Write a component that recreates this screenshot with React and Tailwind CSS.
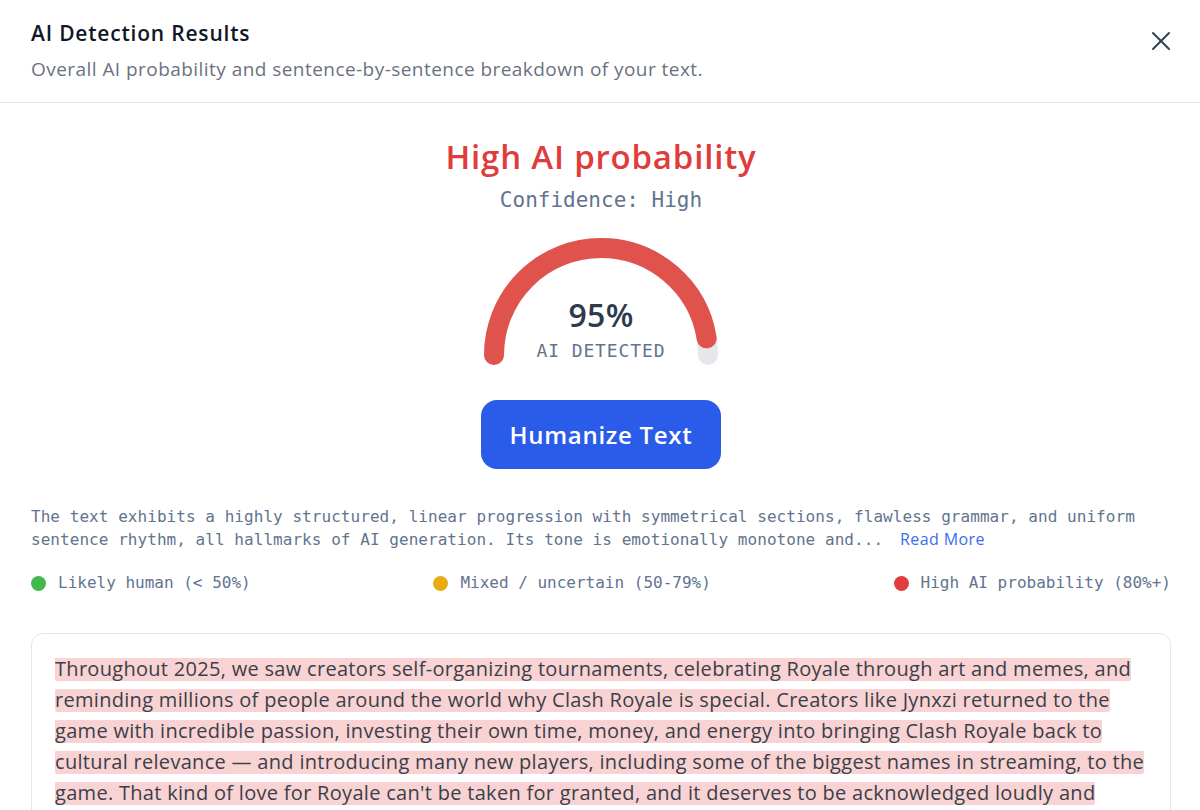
import React from 'react';
import { X } from 'lucide-react';

const sans = { fontFamily: '"Open Sans", "Noto Sans", sans-serif' };
const mono = { fontFamily: '"DejaVu Sans Mono", "Liberation Mono", monospace' };

const Gauge = ({ value }) => (
    <div className="relative w-[240px] h-[130px]">
        <svg width="240" height="130" viewBox="0 0 240 130">
            {/* background track */}
            <path d="M 13 118 A 107 107 0 0 1 227 118" fill="none" stroke="#e5e7eb" strokeWidth="20" strokeLinecap="round" />
            <path
                d="M 13 118 A 107 107 0 0 1 227 118"
                fill="none"
                stroke="#e0524c"
                strokeWidth="20"
                strokeLinecap="round"
                pathLength="100"
                strokeDasharray={`${value} 100`}
            />
        </svg>
        <div className="absolute inset-0 flex flex-col items-center justify-end pb-[4px]">
            <div className="text-[32px] font-semibold text-[#2f3a4d] leading-[36px] tracking-[0.3px]" style={sans}>{value}%</div>
            <div className="text-[18px] tracking-[0.05em] text-slate-500 leading-[24px] mt-[6px]" style={mono}>AI DETECTED</div>
        </div>
    </div>
);

const legend = [
    { label: 'Likely human (< 50%)', dot: 'bg-[#40b94f]' },
    { label: 'Mixed / uncertain (50-79%)', dot: 'bg-[#e6ae12]' },
    { label: 'High AI probability (80%+)', dot: 'bg-[#e23d3d]' },
];

const body =
    "Throughout 2025, we saw creators self-organizing tournaments, celebrating Royale through art and memes, and reminding millions of people around the world why Clash Royale is special. Creators like Jynxzi returned to the game with incredible passion, investing their own time, money, and energy into bringing Clash Royale back to cultural relevance — and introducing many new players, including some of the biggest names in streaming, to the game. That kind of love for Royale can't be taken for granted, and it deserves to be acknowledged loudly and publicly.";

export default function App() {
    return (
        <div className="w-[1200px] h-[810px] overflow-hidden bg-white" style={sans}>
            {/* header */}
            <div className="flex items-start justify-between pl-[31px] pr-[23px] pt-[19px] pb-[19px] border-b border-gray-200">
                <div>
                    <h2 className="text-[21px] leading-[28px] font-semibold text-gray-900 tracking-[0.8px]">AI Detection Results</h2>
                    <p className="text-[19px] leading-[28px] text-gray-500 mt-[8px] tracking-[0.45px]">Overall AI probability and sentence-by-sentence breakdown of your text.</p>
                </div>
                <button className="mt-[6px] text-slate-700">
                    <X size={32} strokeWidth={1.5} />
                </button>
            </div>

            <div className="pl-[31px] pr-[29px]">
                <div className="flex flex-col items-center pt-[34px]">
                    <h1 className="text-[33px] leading-[40px] font-semibold text-[#e03c3c] tracking-[0.8px]">High AI probability</h1>
                    <p className="text-[21px] leading-[28px] text-slate-500 mt-[9px]" style={mono}>Confidence: High</p>
                    <div className="mt-[23px]">
                        <Gauge value={95} />
                    </div>
                    <button className="mt-[33px] w-[240px] h-[69px] rounded-2xl bg-[#2b5ce9] text-white text-[24px] font-semibold tracking-[0.7px]">
                        Humanize Text
                    </button>
                </div>

                <p className="mt-[37px] text-[16px] leading-[22px] text-slate-500 tracking-[0.05px]" style={mono}>
                    The text exhibits a highly structured, linear progression with symmetrical sections, flawless grammar, and uniform sentence rhythm, all hallmarks of AI generation. Its tone is emotionally monotone and...
                    <span className="ml-[17px] text-[#3b6ee8] text-[16px] tracking-[0.4px]" style={sans}>Read More</span>
                </p>

                <div className="mt-[20px] flex justify-between items-center">
                    {legend.map((item) => (
                        <div key={item.label} className="flex items-center gap-[12px]">
                            <span className={`w-[15px] h-[15px] rounded-full ${item.dot}`}></span>
                            <span className="text-[16px] leading-[24px] text-slate-500" style={mono}>{item.label}</span>
                        </div>
                    ))}
                </div>

                <div className="mt-[38px] border border-gray-200 rounded-xl px-[23px] pt-[19px] pb-6">
                    <p className="text-[20px] leading-[31px] text-[#3a3f4a] tracking-[0.3px]">
                        <span className="bg-[linear-gradient(to_bottom,transparent_3px,#f9d3d3_3px,#f9d3d3_calc(100%-1px),transparent_calc(100%-1px))] rounded-[4px] box-decoration-clone">
                            {body}
                        </span>
                    </p>
                </div>
            </div>
        </div>
    );
}
